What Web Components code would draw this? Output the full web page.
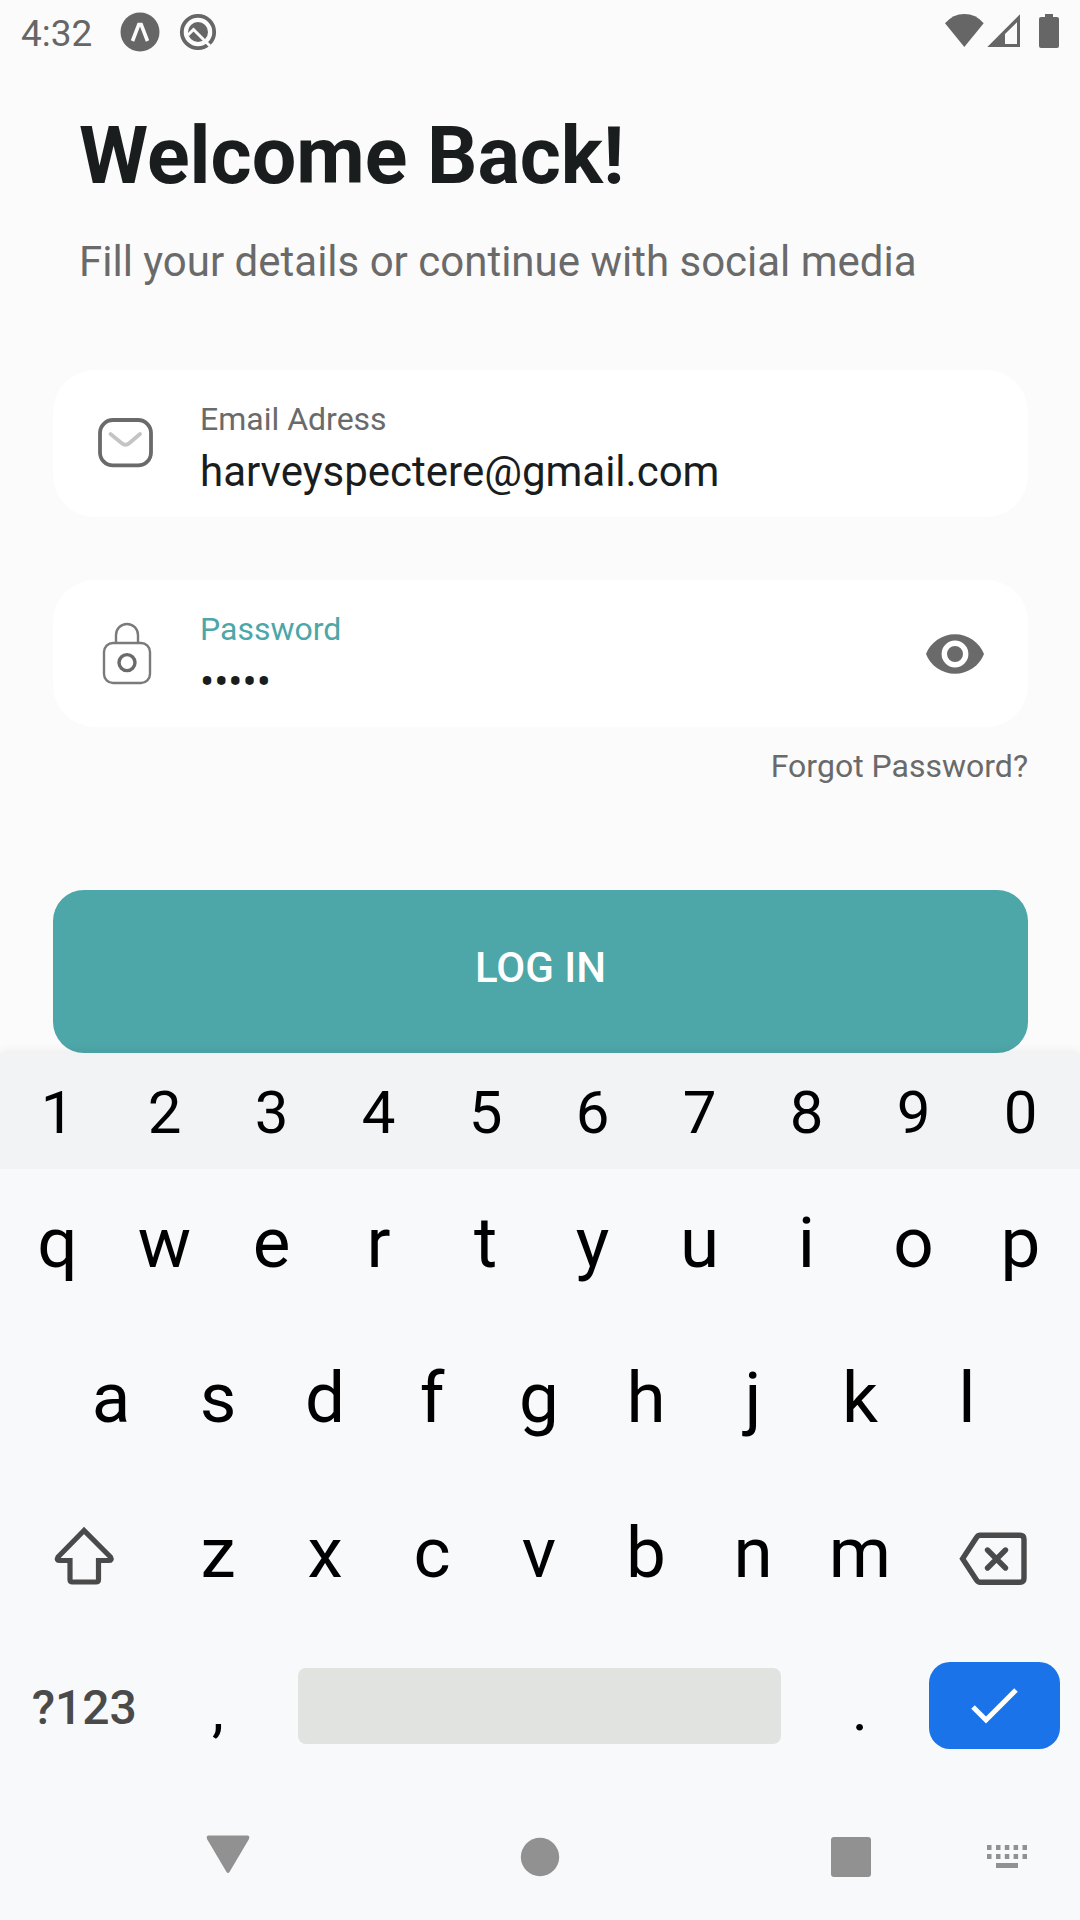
<!DOCTYPE html>
<html lang="en">
<head>
<meta charset="utf-8">
<meta name="viewport" content="width=device-width, initial-scale=1">
<title>Log in</title>
<style>
  body { margin: 0; background: #fbfbfb; font-family: Roboto, "Noto Sans", sans-serif; }
</style>
</head>
<body>
<login-app></login-app>

<script>
const define = (name, html, setup) => {
  const template = document.createElement('template');
  template.innerHTML = html;
  customElements.define(name, class extends HTMLElement {
    constructor() {
      super();
      this.attachShadow({ mode: 'open' }).append(template.content.cloneNode(true));
    }
    connectedCallback() { if (setup) setup(this, this.shadowRoot); }
  });
};

/* Status bar */
define('status-bar', `
  <style>
    :host { display: flex; align-items: center; justify-content: space-between; height: 63px; padding: 0 20px 0 21px; color: #666; }
    div { display: flex; align-items: center; }
    time { font-size: 37px; line-height: 44px; margin-right: 28px; padding-top: 4px; }
    svg { display: block; fill: currentColor; }
    .expo { margin-right: 19px; }
  </style>
  <div>
    <time>4:32</time>
    <svg class="expo" width="40" height="40" viewBox="0 0 40 40" role="img" aria-label="Expo">
      <circle cx="20" cy="20" r="19.5"/>
      <path d="M12.5 29 L18.8 12.5 H21.200 L27.500 29" fill="none" stroke="#fbfbfb" stroke-width="3.6"/>
    </svg>
    <svg width="38" height="38" viewBox="0 0 38 38" role="img" aria-label="Notification">
      <circle cx="19" cy="19" r="16.2" fill="none" stroke="currentColor" stroke-width="3.8"/>
      <circle cx="19" cy="19" r="10"/>
      <path d="M9 22 L14.5 16.5 L31 33" fill="none" stroke="#fbfbfb" stroke-width="3"/>
    </svg>
  </div>
  <div>
    <svg width="115" height="36" viewBox="0 0 115 36" role="img" aria-label="Wi-Fi, signal, battery">
      <path d="M0 9.3 Q8 0 19.3 0 Q31 0 38.7 9.3 L19.3 33 Z"/>
      <path fill-rule="evenodd" d="M75 .3 V33 H42.3 Z M72 8.3 L60 20 V30 H72 Z"/>
      <path d="M100 0 h8 v3 h4 a2 2 0 0 1 2 2 v27 a2 2 0 0 1 -2 2 h-16 a2 2 0 0 1 -2 -2 v-27 a2 2 0 0 1 2 -2 h4 z"/>
    </svg>
  </div>`);

/* Labelled text field: slots for a leading icon and a trailing control */
define('login-field', `
  <style>
    :host { display: flex; align-items: center; min-height: 147px; box-sizing: border-box; padding: 0 41px 0 43px;
      background: #fff; border-radius: 42px; --label: #6a6a6a; }
    :host([active]) { --label: #4da6a8; }
    .text { flex: 1; min-width: 0; display: flex; flex-direction: column; gap: 9px; margin-left: 44px; padding: 30px 0 20px; }
    label { font-size: 32px; line-height: 38px; color: var(--label); }
    input { width: 100%; height: 50px; padding: 0; border: 0; outline: 0; background: none; color: #1a1d1e;
      font: 400 42px/50px Roboto, "Noto Sans", sans-serif; }
  </style>
  <slot name="icon"></slot>
  <div class="text"><label for="box"></label><input id="box"></div>
  <slot name="action"></slot>`, (host, root) => {
  root.querySelector('label').textContent = host.getAttribute('label');
  const box = root.querySelector('input');
  box.type = host.getAttribute('type');
  box.value = host.getAttribute('value');
});

/* Login form */
define('login-form', `
  <style>
    :host { display: block; padding: 47px 52px 0 53px; }
    header { padding: 0 26px; margin-bottom: 83px; }
    h1 { margin: 0 0 35px; font-size: 79px; line-height: 92px; font-weight: 700; color: #1a1d1e; }
    p { margin: 0; font-size: 42px; line-height: 50px; color: #6a6a6a; }
    form { display: flex; flex-direction: column; }
    login-field + login-field { margin-top: 63px; }
    svg { display: block; }
    a { align-self: flex-end; margin: 20px 0 105px; font-size: 32px; line-height: 38px; color: #6a6a6a; text-decoration: none; }
    button { border: 0; padding: 0; background: none; color: #6a6a6a; }
    .submit { height: 163px; padding-bottom: 8px; border-radius: 31px; background: #4da6a8; color: #fff;
      font: 500 42px/50px Roboto, "Noto Sans", sans-serif; }
  </style>
  <header>
    <h1>Welcome Back!</h1>
    <p>Fill your details or continue with social media</p>
  </header>
  <form>
    <login-field label="Email Adress" type="email" value="harveyspectere@gmail.com">
      <svg slot="icon" width="60" height="62" viewBox="0 0 60 62" fill="none" aria-hidden="true">
        <rect x="4" y="7" width="51" height="45.4" rx="13" stroke="#6a6a6a" stroke-width="3.8"/>
        <path d="M14.5 21 L25.5 30 Q29.5 33.5 33.5 30 L44 21" stroke="#c4c4c4" stroke-width="3.8" stroke-linecap="round"/>
      </svg>
    </login-field>
    <login-field label="Password" type="password" value="harve" active>
      <svg slot="icon" width="60" height="64" viewBox="0 0 60 64" fill="none" stroke="#7a7a7a" stroke-width="2.4" aria-hidden="true">
        <rect x="8" y="21" width="46" height="40" rx="9"/>
        <path d="M20 21 V13 A11 11 0 0 1 42 13 V21"/>
        <circle cx="31" cy="40.6" r="8" stroke="#6a6a6a" stroke-width="3.4"/>
      </svg>
      <button slot="action" type="button" aria-label="Show password">
        <svg width="64" height="64" viewBox="0 0 64 64" aria-hidden="true">
          <path fill="currentColor" fill-rule="evenodd" d="M32 12.2 C19 12.2 7.5 20.3 3 32 C7.5 43.7 19 51.8 32 51.8 C45 51.8 56.5 43.7 61 32 C56.5 20.3 45 12.2 32 12.2 Z M32 45.4 A13.4 13.4 0 1 1 32 18.6 A13.4 13.4 0 0 1 32 45.4 Z M32 24 A8 8 0 1 0 32 40 A8 8 0 0 0 32 24 Z"/>
        </svg>
      </button>
    </login-field>
    <a href="#forgot">Forgot Password?</a>
    <button class="submit" type="button">LOG IN</button>
  </form>`);

/* One keyboard key */
define('key-cap', `
  <style>
    :host { display: flex; min-width: 0; grid-column: span 2; }
    :host([span="3"]) { grid-column: span 3; }
    :host([span="10"]) { grid-column: span 10; }
    button { flex: 1; min-width: 0; display: flex; align-items: center; justify-content: center; margin: 0; padding: 0; border: 0;
      background: none; color: #000; font: 400 71px/84px Roboto, "Noto Sans", sans-serif; }
    :host([kind="digit"]) button { font-size: 60px; padding-top: 4px; }
    :host([kind="mark"]) button { font-size: 60px; padding-top: 4px; }
    :host([kind="mode"]) button { font-size: 48px; font-weight: 500; color: #4a4a4a; }
    :host([kind="icon"]) button { color: #4a4a4a; }
    :host([kind="space"]) button { margin: 34px 26px 37px; background: #e1e3e1; border-radius: 8px; }
    :host([kind="enter"]) button { margin: 28px 14px 32px 15px; background: #1a73e8; color: #fff; border-radius: 21px; }
  </style>
  <button type="button"><slot></slot></button>`, (host, root) => {
  const name = host.getAttribute('name');
  if (name) root.querySelector('button').setAttribute('aria-label', name);
});

/* On-screen keyboard */
define('soft-keyboard', `
  <style>
    :host { display: block; background: #f8f9fb; box-shadow: 0 -1px 10px rgba(0, 0, 0, .07); }
    .row { display: grid; grid-template-columns: repeat(20, 1fr); height: 147px; padding: 0 6px 0 4px; }
    .digits { height: 116px; background: #f1f3f4; }
    .letters { display: flex; flex-direction: column; gap: 8px; }
    .home key-cap:first-child { grid-column: 2 / span 2; }
    svg { display: block; fill: none; stroke: currentColor; }
  </style>
  <div class="row digits"></div>
  <div class="letters">
    <div class="row top"></div>
    <div class="row home"></div>
    <div class="row bottom">
      <key-cap span="3" kind="icon" name="Shift">
        <svg width="64" height="72" viewBox="0 0 64 72" stroke-width="5.2" aria-hidden="true">
          <path d="M32 13.5 L6 40 Q4 43.5 8 43.5 H18 V62.5 Q18 65 20.5 65 H44 Q46.500 65 46.500 62.5 V43.5 H56.500 Q60.500 43.500 58.500 40 Z"/>
        </svg>
      </key-cap>
      <key-cap span="3" kind="icon" name="Delete">
        <svg width="70" height="72" viewBox="0 0 70 72" stroke-width="5.4" aria-hidden="true">
          <path d="M21 18.3 H61 Q65 18.3 65 22.3 V61.2 Q65 65.2 61 65.2 H21 Q19 65.2 17.5 63 L3.6 41.8 L17.5 20.5 Q19 18.3 21 18.3 Z"/>
          <path d="M27.500 33 L45.500 51 M45.500 33 L27.500 51" transform="translate(1 0)" stroke-linecap="round"/>
        </svg>
      </key-cap>
    </div>
    <div class="row">
      <key-cap span="3" kind="mode">?123</key-cap>
      <key-cap kind="mark">,</key-cap>
      <key-cap span="10" kind="space" name="Space"></key-cap>
      <key-cap kind="mark">.</key-cap>
      <key-cap span="3" kind="enter" name="Done">
        <svg width="48" height="40" viewBox="0 0 48 40" stroke-width="5" aria-hidden="true">
          <path d="M3 21 L16 34 L46 4"/>
        </svg>
      </key-cap>
    </div>
  </div>`, (host, root) => {
  const caps = (text, kind) => [...text].map(c => {
    const key = document.createElement('key-cap');
    if (kind) key.setAttribute('kind', kind);
    key.textContent = c;
    return key;
  });
  root.querySelector('.digits').append(...caps('1234567890', 'digit'));
  root.querySelector('.top').append(...caps('qwertyuiop'));
  root.querySelector('.home').append(...caps('asdfghjkl'));
  root.querySelector('.bottom key-cap').after(...caps('zxcvbnm'));
});

/* System navigation */
define('nav-bar', `
  <style>
    :host { display: grid; grid-template-columns: 168fr 456fr 166fr 146fr; height: 139px; padding: 13px 0 0 144px; box-sizing: border-box; background: #f8f9fb; }
    button { display: flex; align-items: center; justify-content: center; border: 0; padding: 0; background: none; color: #919191; }
    svg { fill: currentColor; }
  </style>
  <button type="button" aria-label="Back"><svg width="44" height="44" viewBox="0 0 44 44"><path d="M2.5 .5 H41.5 Q44 .5 43 4 L23.5 37 Q22 39 20.5 37 L1 4 Q0 .5 2.5 .5 Z"/></svg></button>
  <button type="button" aria-label="Home"><svg width="40" height="40" viewBox="0 0 40 40"><circle cx="20" cy="20" r="19.2"/></svg></button>
  <button type="button" aria-label="Recent apps"><svg width="40" height="40" viewBox="0 0 40 40"><rect width="40" height="40" rx="3"/></svg></button>
  <button type="button" aria-label="Choose keyboard"><svg width="42" height="24" viewBox="0 0 42 24">
    <path d="M1 0h4.500v5h-4.500z M10 0h4.500v5h-4.500z M18.800 0h4.500v5h-4.500z M27.600 0h4.500v5h-4.500z M36.500 0h4.500v5h-4.500z M1 9h4.500v5h-4.500z M10 9h4.500v5h-4.500z M18.800 9h4.500v5h-4.500z M27.600 9h4.500v5h-4.500z M36.500 9h4.500v5h-4.500z M10 18h22v5h-22z"/>
  </svg></button>`);

define('login-app', `
  <style>
    :host { display: flex; flex-direction: column; min-height: 100vh; }
    .dock { margin-top: auto; }
  </style>
  <status-bar></status-bar>
  <login-form></login-form>
  <div class="dock">
    <soft-keyboard></soft-keyboard>
    <nav-bar></nav-bar>
  </div>`);
</script>
</body>
</html>
